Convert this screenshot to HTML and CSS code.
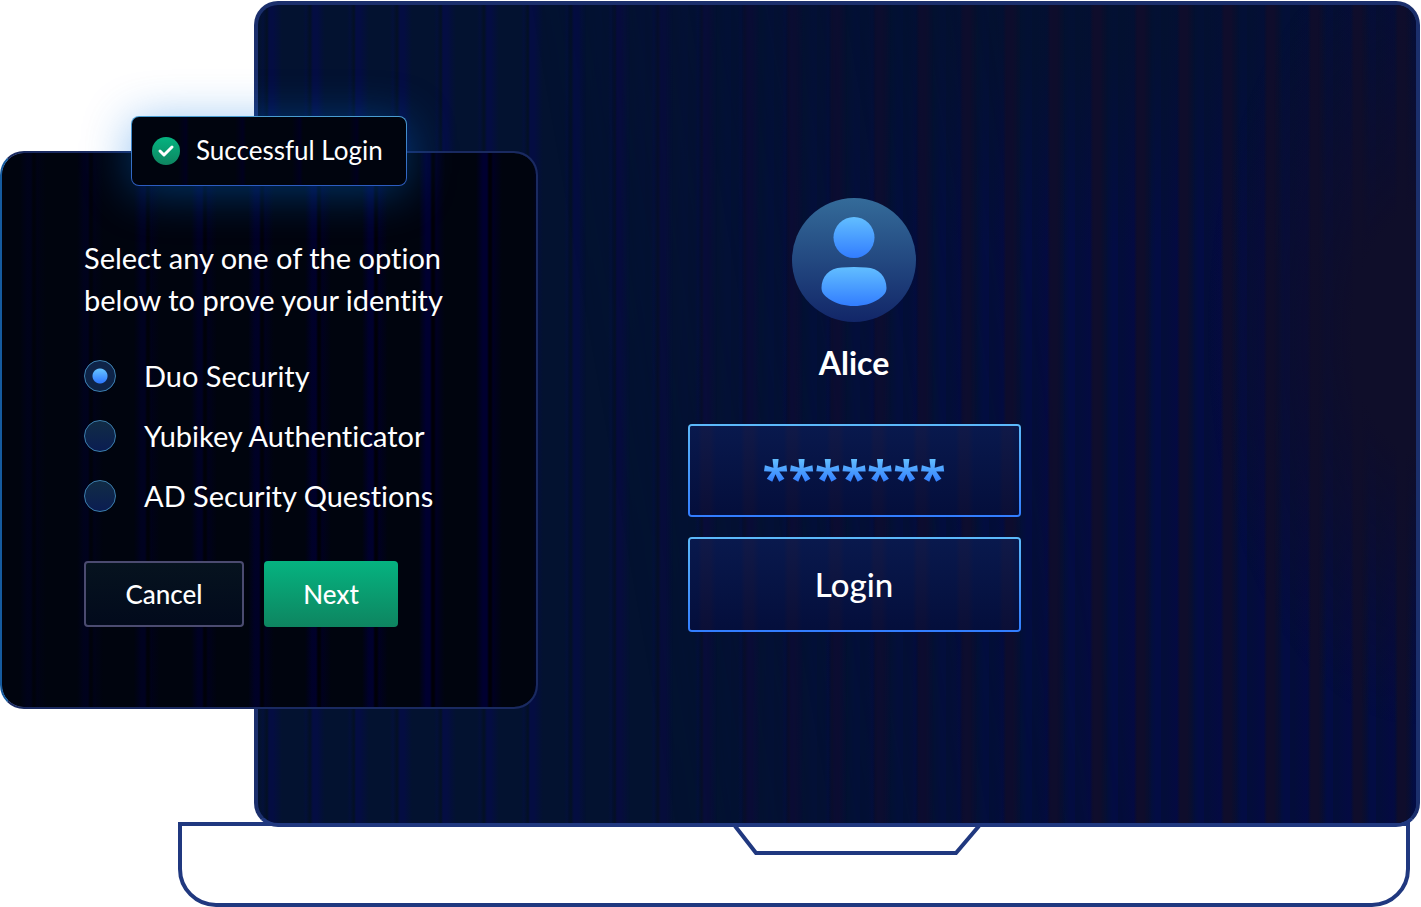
FILE: index.html
```html
<!DOCTYPE html>
<html lang="en">
<head>
    <meta charset="UTF-8">
    <meta name="viewport" content="width=device-width, initial-scale=1.0">
    <title>Login</title>
    <link rel="stylesheet" href="styles.css">
</head>
<body>
    <div class="scene">
        <div class="laptop">
            <main class="screen">
                <form class="login">
                    <svg class="avatar" viewBox="0 0 124 124" aria-hidden="true">
                        <defs>
                            <linearGradient id="disc" x1="0" y1="0" x2="0" y2="1">
                                <stop offset="0" stop-color="#346b99"/>
                                <stop offset="1" stop-color="#122668"/>
                            </linearGradient>
                            <linearGradient id="person" x1="0" y1="0" x2="0" y2="1">
                                <stop offset="0" stop-color="#62beff"/>
                                <stop offset="1" stop-color="#327dff"/>
                            </linearGradient>
                        </defs>
                        <circle cx="62" cy="62" r="62" fill="url(#disc)"/>
                        <circle cx="62" cy="39.500" r="20.500" fill="url(#person)"/>
                        <path d="M50 69.500 Q62 68.500 74 69.500 C87 70 94.500 79 94.500 90 C94.500 95 91 98 87 101 C79 106 71 108 62 108 C53 108 45 106 37 101 C33 98 29.500 95 29.500 90 C29.500 79 37 70 50 69.500 Z" fill="url(#person)"/>
                    </svg>
                    <h1 class="user-name">Alice</h1>
                    <div class="panel password-panel">
                        <input class="password" type="text" value="*******" aria-label="Password">
                    </div>
                    <button class="panel login-button" type="button">Login</button>
                </form>
            </main>
            <div class="base">
                <svg class="notch" viewBox="0 0 248 32" aria-hidden="true">
                    <path d="M2 0 L23 27 H223 L246 0" fill="none" stroke="#20387f" stroke-width="4"/>
                </svg>
            </div>
        </div>

        <section class="dialog">
            <div class="toast" role="status">
                <svg class="check" viewBox="0 0 28 28" aria-hidden="true">
                    <defs>
                        <linearGradient id="green" x1="0" y1="0" x2="0" y2="1">
                            <stop offset="0" stop-color="#05b380"/>
                            <stop offset="1" stop-color="#0e8560"/>
                        </linearGradient>
                    </defs>
                    <circle cx="14" cy="14" r="14" fill="url(#green)"/>
                    <path d="M8 14 L12 18 L20 10" fill="none" stroke="#fff" stroke-width="3" stroke-linecap="round" stroke-linejoin="round"/>
                </svg>
                <span class="toast-text">Successful Login</span>
            </div>

            <form>
                <p class="prompt">Select any one of the option<br>below to prove your identity</p>
                <div class="options">
                    <label class="option"><input type="radio" name="method" checked>Duo Security</label>
                    <label class="option"><input type="radio" name="method">Yubikey Authenticator</label>
                    <label class="option"><input type="radio" name="method">AD Security Questions</label>
                </div>
                <div class="actions">
                    <button class="button cancel" type="button">Cancel</button>
                    <button class="button next" type="button">Next</button>
                </div>
            </form>
        </section>
    </div>
</body>
</html>
```
FILE: styles.css
```css
:root {
    --frame: #20387f;
    --light-blue: #5cb9fa;
    --blue: #327dff;
    --green-top: #05b380;
    --green-bottom: #0e8560;
}

* {
    box-sizing: border-box;
}

body {
    margin: 0;
    background: #fff;
    color: #fff;
    font-family: Lato, sans-serif;
    font-variant-ligatures: none;
}

button,
input {
    margin: 0;
    color: inherit;
    font-family: inherit;
    font-variant-ligatures: none;
}

/* The laptop and the dialog share one cell, the dialog lies on top */
.scene {
    display: grid;
}

.laptop {
    grid-area: 1 / 1;
    margin: 1px 1px 0 178px;
}

.screen {
    position: relative;
    isolation: isolate;
    overflow: hidden;
    display: flex;
    justify-content: center;
    margin-left: 76px;
    padding: 193px 0 191px 34px;
    border: 4px solid #1b2f6c;
    border-bottom-color: var(--frame);
    border-radius: 24px;
    background:
        repeating-linear-gradient(90deg,
            transparent 0 2px, rgba(4, 12, 78, 0.3) 5px, #031024 9px, #040d42 11px 15px, transparent 24px,
            transparent 45px, rgba(4, 12, 78, 0.3) 48px, #031024 52px, #040d42 55px 59px, transparent 67px 87px) padding-box,
        #031230;
}

/* Blue and maroon bands that grow stronger to the right */
.screen::before,
.screen::after {
    content: "";
    position: absolute;
    inset: 0;
    z-index: -1;
}

.screen::before {
    background:
        radial-gradient(ellipse 45% 30% at 70% 0, rgba(3, 18, 44, 0.7) 20%, transparent),
        repeating-linear-gradient(90deg, #030d3a 0 4px, #040a42 16px, #031036 24px 30px, #030c44 38px 43px);
    mask-image: linear-gradient(80deg, transparent 32%, #000 68%);
}

.screen::after {
    background:
        radial-gradient(ellipse 18% 48% at 100% 40%, #0f0e2a 30%, transparent),
        repeating-linear-gradient(90deg,
            transparent 0 6px, #0f0d2c 9px 16px, transparent 24px 49px,
            #0f0d2c 52px 59px, transparent 67px 87px);
    mask-image: linear-gradient(90deg, transparent 25%, rgba(0, 0, 0, 0.7) 50%, #000 75%);
}

.login {
    display: flex;
    flex-direction: column;
    align-items: center;
    width: 333px;
}

.avatar {
    width: 124px;
    height: 124px;
}

.user-name {
    margin: 21px 0 41px;
    font-size: 32px;
    line-height: 40px;
    font-weight: 700;
}

.panel {
    width: 100%;
    border: 2px solid transparent;
    border-radius: 4px;
    background:
        linear-gradient(rgba(10, 28, 80, 0.8), rgba(4, 15, 58, 0.8)) padding-box,
        repeating-linear-gradient(90deg, #040c42 0 8px, #280e28 12px 20px, #040c42 26px 43px) padding-box,
        linear-gradient(var(--light-blue), var(--blue)) border-box;
}

.password-panel {
    display: flex;
    justify-content: center;
    align-items: center;
    height: 93px;
}

.password {
    width: 100%;
    padding: 14px 0 0;
    border: 0;
    outline: 0;
    background: linear-gradient(#62beff 35%, var(--blue) 65%) text;
    color: transparent;
    font-family: "Open Sans", sans-serif;
    font-size: 48px;
    line-height: 64px;
    font-weight: 700;
    text-align: center;
}

.login-button {
    height: 95px;
    margin-top: 20px;
    padding-bottom: 2px;
    font-size: 33px;
    font-weight: 500;
}

.base {
    display: flex;
    justify-content: center;
    align-items: flex-start;
    height: 85px;
    margin: -5px 10px 0 0;
    padding-left: 126px;
    border: 4px solid var(--frame);
    border-radius: 0 0 38px 38px;
}

.notch {
    width: 248px;
    height: 32px;
}

.dialog {
    grid-area: 1 / 1;
    position: relative;
    align-self: start;
    justify-self: start;
    width: 538px;
    margin-top: 151px;
    padding: 83px 80px 79px 81px;
    border: 2px solid #1a2a60;
    border-left-color: #155b9f;
    border-radius: 24px;
    background:
        linear-gradient(90deg, rgba(0, 4, 14, 0.7), transparent 80%) padding-box,
        repeating-linear-gradient(90deg, #00040e 0 18px, #000030 25px 29px, #000008 31px 33px, #000022 35px, #00040e 44px 57px) padding-box #1a2a60;
}

.dialog form {
    padding: 1px;
}

.toast {
    position: absolute;
    top: -37px;
    left: 129px;
    display: flex;
    align-items: center;
    gap: 16px;
    width: 276px;
    height: 70px;
    padding-left: 20px;
    border: 1px solid transparent;
    border-radius: 8px;
    background:
        repeating-linear-gradient(90deg, #00040e 0 46px, #00001e 54px, #00040e 57px) padding-box,
        linear-gradient(#4a9ed2, #2c5cc0) border-box;
    box-shadow: 0 6px 48px rgba(0, 112, 224, 0.45);
    font-size: 26px;
    white-space: nowrap;
}

.toast-text {
    padding-bottom: 2px;
}

.check {
    width: 28px;
    height: 28px;
}

.prompt {
    margin: 0;
    font-size: 29px;
    line-height: 42px;
    white-space: nowrap;
}

.options {
    display: flex;
    flex-direction: column;
    gap: 28px;
    margin-top: 39px;
}

.option {
    display: flex;
    align-items: center;
    gap: 28px;
    font-size: 29px;
    line-height: 32px;
}

.option input {
    appearance: none;
    width: 32px;
    height: 32px;
    border: 1px solid #3c7fae;
    border-radius: 50%;
    background: linear-gradient(#112c45, #0b1d52);
}

.option input:checked {
    background:
        radial-gradient(circle, transparent 7px, #0e2448 8px),
        linear-gradient(#62beff 30%, var(--blue) 70%);
}

.actions {
    display: flex;
    gap: 20px;
    margin-top: 49px;
}

.button {
    height: 66px;
    padding-bottom: 2px;
    border-radius: 4px;
    font-size: 26px;
    font-weight: 500;
}

.cancel {
    width: 160px;
    border: 2px solid #4b4b70;
    background: linear-gradient(#06131f, #020a1c);
}

.next {
    width: 134px;
    border: 0;
    background: linear-gradient(var(--green-top), var(--green-bottom));
}
```
